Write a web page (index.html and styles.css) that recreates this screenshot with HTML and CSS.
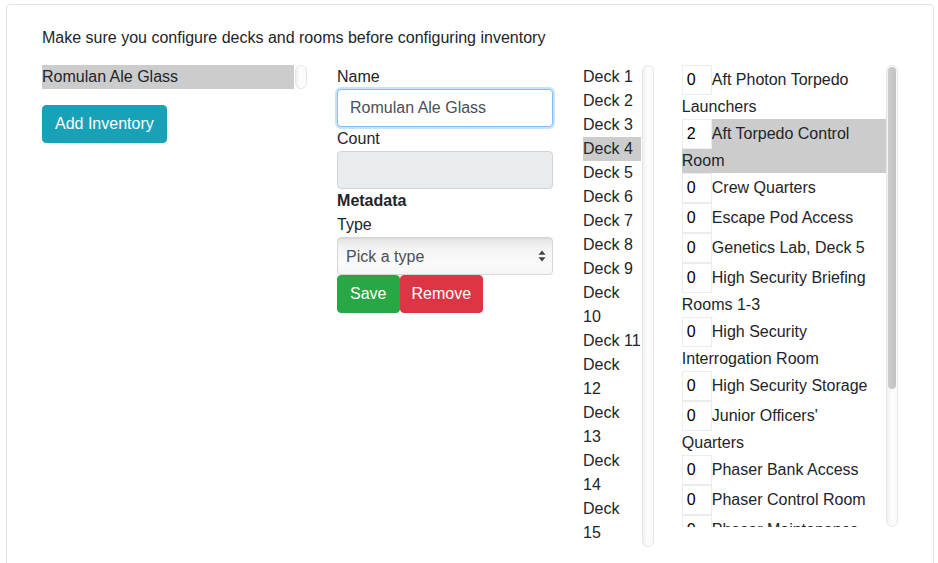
FILE: index.html
```html
<!DOCTYPE html>
<html lang="en">
<head>
<meta charset="utf-8">
<title>Inventory</title>
<link rel="stylesheet" href="styles.css">
</head>
<body>
<div class="card">
  <div class="card-body">
    <p class="intro">Make sure you configure decks and rooms before configuring inventory</p>
    <div class="row">
      <div class="col col-items">
        <div class="scroll-box box-items">
          <ul class="list">
            <li class="selected">Romulan Ale Glass</li>
          </ul>
          <div class="scrollbar"></div>
        </div>
        <button class="btn btn-info">Add Inventory</button>
      </div>
      <div class="col col-form">
        <label class="label">Name</label>
        <input class="form-control focus" type="text" value="Romulan Ale Glass">
        <label class="label">Count</label>
        <input class="form-control" type="text" disabled>
        <div class="label bold">Metadata</div>
        <label class="label">Type</label>
        <div class="select-wrap">
          <select class="select">
            <option>Pick a type</option>
          </select>
          <svg class="select-arrows" width="8" height="12" viewBox="0 0 8 12"><path d="M4 0.5 L7.5 4.8 H0.5 Z M4 11.5 L7.5 7.2 H0.5 Z" fill="#444"/></svg>
        </div>
        <div class="btn-row">
          <button class="btn btn-success">Save</button><button class="btn btn-danger">Remove</button>
        </div>
      </div>
      <div class="col col-decks">
        <div class="scroll-box box-decks">
          <ul class="list">
            <li>Deck 1</li>
            <li>Deck 2</li>
            <li>Deck 3</li>
            <li class="selected">Deck 4</li>
            <li>Deck 5</li>
            <li>Deck 6</li>
            <li>Deck 7</li>
            <li>Deck 8</li>
            <li>Deck 9</li>
            <li>Deck 10</li>
            <li>Deck&nbsp;11</li>
            <li>Deck 12</li>
            <li>Deck 13</li>
            <li>Deck 14</li>
            <li>Deck 15</li>
          </ul>
          <div class="scrollbar"></div>
        </div>
      </div>
      <div class="col col-rooms">
        <div class="scroll-box box-rooms">
          <ul class="list list-rooms">
            <li><input class="count" type="text" value="0">Aft Photon Torpedo Launchers</li>
            <li class="selected"><input class="count" type="text" value="2">Aft Torpedo Control Room</li>
            <li><input class="count" type="text" value="0">Crew Quarters</li>
            <li><input class="count" type="text" value="0">Escape Pod Access</li>
            <li><input class="count" type="text" value="0">Genetics Lab, Deck 5</li>
            <li><input class="count" type="text" value="0">High Security Briefing Rooms 1-3</li>
            <li><input class="count" type="text" value="0">High Security Interrogation Room</li>
            <li><input class="count" type="text" value="0">High Security Storage</li>
            <li><input class="count" type="text" value="0">Junior Officers' Quarters</li>
            <li><input class="count" type="text" value="0">Phaser Bank Access</li>
            <li><input class="count" type="text" value="0">Phaser Control Room</li>
            <li><input class="count" type="text" value="0">Phaser Maintenance</li>
            <li><input class="count" type="text" value="0">Security Office</li>
            <li><input class="count" type="text" value="0">Shuttle Bay</li>
            <li><input class="count" type="text" value="0">Torpedo Loading</li>
            <li><input class="count" type="text" value="0">Transporter Room 1</li>
          </ul>
          <div class="scrollbar"><div class="thumb"></div></div>
        </div>
      </div>
    </div>
  </div>
</div>
</body>
</html>
```

FILE: styles.css
```css
* { box-sizing: border-box; }

html, body {
  margin: 0;
  padding: 0;
  background: #fff;
  overflow: hidden;
}

body {
  font-family: "Liberation Sans", Arial, Helvetica, sans-serif;
  font-size: 16px;
  line-height: 24px;
  color: #212529;
}

.card {
  margin: 4px 4px 0 6px;
  width: 928px;
  min-height: 620px;
  border: 1px solid #e2e2e2;
  border-radius: 4px;
}

.card-body {
  padding: 21px 35px 20px 35px;
}

.intro {
  margin: 0 0 15px 0;
}

.row {
  display: flex;
  align-items: flex-start;
}

.col-items { width: 266px; margin-right: 30px; }
.col-form { width: 216px; margin-right: 30px; }
.col-decks { width: 71px; margin-right: 28px; }
.col-rooms { width: 217px; }

.scroll-box {
  display: flex;
  align-items: stretch;
}

.list {
  flex: 1;
  min-width: 0;
  list-style: none;
  margin: 0;
  padding: 0;
  overflow: hidden;
}

.list li.selected {
  background: #cccccc;
}

.scrollbar {
  flex: 0 0 12px;
  width: 12px;
  margin-left: 1px;
  border: 1px solid #e6e6e6;
  border-radius: 6px;
  background: linear-gradient(to right, #f0f0f0 0%, #fdfdfd 45%, #fafafa 100%);
  position: relative;
}

.box-rooms .scrollbar {
  margin-left: 0;
}

.thumb {
  position: absolute;
  left: 1px;
  right: 1px;
  top: 1px;
  height: 322px;
  border-radius: 5px;
  background: linear-gradient(to right, #cdcdcd, #c2c2c2);
}

.box-items {
  height: 24px;
  margin-bottom: 16px;
}

.box-decks {
  height: 482px;
}

.box-rooms {
  height: 462px;
}

.list-rooms li {
  padding-right: 5px;
}

.count {
  width: 30px;
  height: 30px;
  margin: 0;
  padding: 0 0 0 4px;
  border: 1px solid #ececec;
  background: #fff;
  font-family: inherit;
  font-size: 16px;
  color: #000;
}

.label {
  display: block;
}

.bold {
  font-weight: bold;
}

.form-control {
  display: block;
  width: 216px;
  height: 38px;
  margin: 0;
  padding: 6px 12px;
  font-family: inherit;
  font-size: 16px;
  color: #495057;
  background: #fff;
  border: 1px solid #ced4da;
  border-radius: 4px;
}

.form-control.focus {
  border-color: #80bdff;
  box-shadow: 0 0 0 2px rgba(0, 123, 255, 0.22);
  outline: none;
}

.form-control:disabled {
  background: #e9ecef;
}

.select-wrap {
  position: relative;
  width: 216px;
  height: 38px;
}

.select {
  appearance: none;
  -webkit-appearance: none;
  display: block;
  width: 216px;
  height: 38px;
  margin: 0;
  padding: 0 8px;
  font-family: inherit;
  font-size: 16px;
  color: #495057;
  border: 1px solid #d6d6d6;
  border-radius: 4px;
  background: linear-gradient(to bottom, #e4e4e4 0%, #f4f4f4 30%, #fafafa 70%, #f6f6f6 100%);
  box-shadow: inset 0 1px 1px rgba(0, 0, 0, 0.05);
}

.select-arrows {
  position: absolute;
  right: 7px;
  top: 13px;
}

.btn-row {
  display: flex;
}

.btn {
  display: inline-block;
  height: 38px;
  margin: 0;
  padding: 0 12px;
  font-family: inherit;
  font-size: 16px;
  line-height: 36px;
  color: #fff;
  border: 1px solid transparent;
  border-radius: 4px;
}

.btn-danger {
  padding: 0 11px;
}

.btn-info {
  background: #17a2b8;
  border-color: #17a2b8;
}

.btn-success {
  background: #28a745;
  border-color: #28a745;
}

.btn-danger {
  background: #dc3545;
  border-color: #dc3545;
}
```
